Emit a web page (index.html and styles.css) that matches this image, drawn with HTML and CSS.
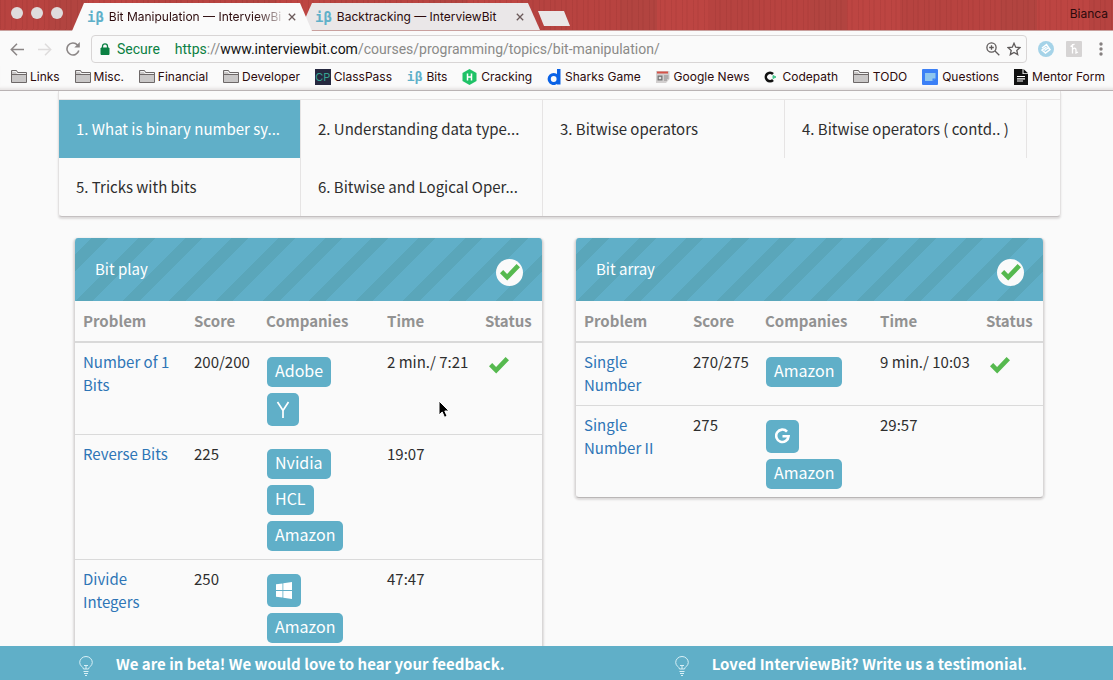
FILE: index.html
```html
<!DOCTYPE html>
<html lang="en">
<head>
<meta charset="utf-8">
<title>Bit Manipulation — InterviewBit</title>
<link rel="stylesheet" href="styles.css">
</head>
<body>
<svg class="defs" aria-hidden="true">
  <symbol id="folder" viewBox="0 0 16 13"><path d="M.5 12.500V.5h5l1.200 2h8.800v10z" fill="#c9c7c7" stroke="#6d6868"/><path d="M1 4.500h14" stroke="#6d6868"/><path d="M1.500 1.500h3.500l1 2H15" stroke="#f3f3f3" fill="none"/></symbol>
  <symbol id="check" viewBox="0 0 20 17"><path d="M0 9.200 3.200 6l3.900 3.900L16.600 0 20 3.300 7.200 16.500z" fill="#56b94f"/></symbol>
  <symbol id="bulb" viewBox="0 0 14 20"><g fill="none" stroke="#d9f0f6" stroke-width="1"><path d="M4.500 13C4.500 11 .7 10 .7 6.500a6.300 6 0 0 1 12.600 0C13.300 10 9.500 11 9.500 13z"/><path d="M5 9.500h4M7 10v3M4.500 15.500h5M5 17.500h4M6 19.500h2"/></g></symbol>
  <symbol id="close" viewBox="0 0 8 8"><path d="M.8.8l6.400 6.400M7.200.8.8 7.200" stroke="#6b5a5a" stroke-width="1.300"/></symbol>
</svg>

<header class="browser">
  <div class="tabstrip">
    <div class="lights"><i></i><i></i><i></i></div>
    <div class="tab tab-active"><span class="ib">iβ</span><span class="tab-title fade">Bit Manipulation — InterviewBi</span><button class="close" aria-label="Close tab"><svg width="8" height="8"><use href="#close"/></svg></button></div>
    <div class="tab tab-idle"><span class="ib">iβ</span><span class="tab-title">Backtracking — InterviewBit</span><button class="close" aria-label="Close tab"><svg width="8" height="8"><use href="#close"/></svg></button></div>
    <button class="newtab" aria-label="New tab"></button>
    <span class="profile">Bianca</span>
  </div>
  <div class="toolbar">
    <button class="icon-btn" aria-label="Back"><svg width="14" height="13" viewBox="0 0 14 13" fill="none" stroke="#8b8686" stroke-width="1.500"><path d="M14 6.500H1.500M7 .8 1.300 6.500 7 12.200"/></svg></button>
    <button class="icon-btn" aria-label="Forward"><svg width="14" height="13" viewBox="0 0 14 13" fill="none" stroke="#dedcdc" stroke-width="1.500"><path d="M0 6.500h12.500M7 .8l5.700 5.700L7 12.200"/></svg></button>
    <button class="icon-btn" aria-label="Reload"><svg width="14" height="14" viewBox="0 0 14 14" fill="none" stroke="#8b8686" stroke-width="1.600"><path d="M12.800 8.500A6 6 0 1 1 11.500 3"/><path d="M13.800 0v5.500H8.300z" fill="#8b8686" stroke="none"/></svg></button>
    <div class="address">
      <svg width="10" height="12" viewBox="0 0 10 12"><path d="M1 5h8v6.500H1z" fill="#0b8043" stroke="#0b8043"/><path d="M2.500 5V3.200a2.500 2.300 0 0 1 5 0V5" fill="none" stroke="#0b8043" stroke-width="1.300"/></svg>
      <span class="secure">Secure</span>
      <span class="url"><span class="scheme">https</span>://<b>www.interviewbit.com</b>/courses/programming/topics/bit-manipulation/</span>
      <button class="icon-btn" aria-label="Zoom"><svg width="14" height="14" viewBox="0 0 14 14" fill="none" stroke="#5e5a5a" stroke-width="1.300"><circle cx="5.500" cy="5.500" r="4.600"/><path d="M9 9l4.300 4.300M3.200 5.500h4.600M5.500 3.200v4.600"/></svg></button>
      <button class="icon-btn" aria-label="Bookmark"><svg width="14" height="14" viewBox="0 0 14 14" fill="none" stroke="#5e5a5a" stroke-width="1.300"><path d="m7 1.300 1.700 3.900 4.300.4-3.200 2.800.9 4.200L7 10.400l-3.700 2.200.9-4.200L1 5.600l4.300-.4z"/></svg></button>
    </div>
    <div class="extensions">
      <svg width="16" height="16" viewBox="0 0 16 16"><circle cx="8" cy="8" r="8" fill="#a5d3e8"/><path d="m4 7 4.500-3.500 3.500 5-4.500 3.500-3.500-3 4.500-3M6.500 9.500 10 7" fill="none" stroke="#fff" stroke-width="1.500"/></svg>
      <svg width="16" height="16" viewBox="0 0 16 16"><rect width="16" height="16" rx="1" fill="#d6d4d4"/><path d="M6.500 3v9.500M4.500 5.500l4-2.500M6.500 8.500c1.500-2 3.500-1.500 3.500.5V12l2-1" fill="none" stroke="#fff" stroke-width="1.300"/></svg>
      <button class="icon-btn" aria-label="Menu"><svg width="4" height="14" viewBox="0 0 4 14" fill="#858080"><circle cx="2" cy="2" r="1.700"/><circle cx="2" cy="7" r="1.700"/><circle cx="2" cy="12" r="1.700"/></svg></button>
    </div>
  </div>
  <nav class="bookmarks">
    <a href="#"><svg width="16" height="13"><use href="#folder"/></svg>Links</a>
    <a href="#"><svg width="16" height="13"><use href="#folder"/></svg>Misc.</a>
    <a href="#"><svg width="16" height="13"><use href="#folder"/></svg>Financial</a>
    <a href="#"><svg width="16" height="13"><use href="#folder"/></svg>Developer</a>
    <a href="#"><span class="cp">CP</span>ClassPass</a>
    <a href="#"><span class="ib">iβ</span>Bits</a>
    <a href="#"><svg width="15" height="16" viewBox="0 0 15 16"><path d="m7.500 0 7 4v8l-7 4-7-4V4z" fill="#1fc267"/><path d="M5.500 4.500v7M9.500 4.500v7M5.500 8h4" stroke="#fff" stroke-width="1.500"/></svg>Cracking</a>
    <a href="#"><svg width="14" height="16" viewBox="0 0 14 16"><path d="M10 0h3.500v15.500H10z" fill="#0a62e6"/><circle cx="6.700" cy="10" r="4.500" fill="none" stroke="#0a62e6" stroke-width="3.200"/></svg>Sharks Game</a>
    <a href="#"><svg width="14" height="12" viewBox="0 0 14 12"><path d="M0 0h13.500v8l-3.500 4H0z" fill="#d2cfcf"/><path d="M1 1.500h11" stroke="#d45348" stroke-width="2"/><path d="M8 5h4.500M8 7h4.500M8 9h3" stroke="#8c8888"/><path d="M1.500 4.500h5v5h-5z" fill="#777"/><circle cx="4" cy="7" r="1.300" fill="#ddd"/></svg>Google News</a>
    <a href="#"><svg width="14" height="12" viewBox="0 0 14 12"><path d="M9 3A4.200 4.200 0 1 0 9 9" fill="none" stroke="#111" stroke-width="2.600"/><path d="m9 4.500 3 1.500-3 1.500z" fill="#43c58a" stroke="#43c58a"/></svg>Codepath</a>
    <a href="#"><svg width="16" height="13"><use href="#folder"/></svg>TODO</a>
    <a href="#"><svg width="16" height="16" viewBox="0 0 16 16"><rect width="16" height="16" rx="1" fill="#3c80f6"/><path d="M3 4h10.500v5.500L10.500 12H3z" fill="#8fc6ee"/><path d="M10.500 12V9.500h3z" fill="#3c80f6"/></svg>Questions</a>
    <a href="#"><svg width="14" height="16" viewBox="0 0 14 16"><path d="M0 0h8.500v5H14v11H0z" fill="#111"/><path d="M9.500 0 14 4.200H9.500z" fill="#111"/><path d="M3 7.500h8M3 9.800h8M3 12h6" stroke="#fff" stroke-width="1.200"/></svg>Mentor Form</a>
  </nav>
</header>

<main class="page">
  <nav class="topics">
    <a class="current" href="#">1. What is binary number sy...</a>
    <a href="#">2. Understanding data type...</a>
    <a href="#">3. Bitwise operators</a>
    <a href="#">4. Bitwise operators ( contd.. )</a>
    <a href="#">5. Tricks with bits</a>
    <a href="#">6. Bitwise and Logical Oper...</a>
  </nav>
  <div class="cards">
    <section class="card">
      <div class="card-head"><h2>Bit play</h2><span class="done"><svg width="20" height="17"><use href="#check"/></svg></span></div>
      <table>
        <colgroup><col class="c-name"><col class="c-score"><col class="c-comp"><col class="c-time"><col class="c-status"></colgroup>
        <thead><tr><th>Problem</th><th>Score</th><th>Companies</th><th>Time</th><th>Status</th></tr></thead>
        <tbody>
          <tr><td><a href="#">Number of 1 Bits</a></td><td>200/200</td><td><div class="badges"><span class="badge">Adobe</span><span class="badge mark"><svg width="14" height="17" viewBox="0 0 14 17" fill="none" stroke="#fff" stroke-width="1.700"><path d="M1.500 1 7 9.500 12.500 1M7 9v8"/></svg></span></div></td><td>2 min./ 7:21</td><td><svg class="tick" width="20" height="17"><use href="#check"/></svg></td></tr>
          <tr><td><a href="#">Reverse Bits</a></td><td>225</td><td><div class="badges"><span class="badge">Nvidia</span><span class="badge">HCL</span><span class="badge">Amazon</span></div></td><td>19:07</td><td></td></tr>
          <tr><td><a href="#">Divide Integers</a></td><td>250</td><td><div class="badges"><span class="badge mark"><svg width="16" height="17" viewBox="0 0 16 17" fill="#fff"><path d="M0 2.300 6.500 1.400V8H0zM7.300 1.200 16 0v8H7.300zM0 9h6.500v6.600L0 14.700zM7.300 9H16v8l-8.700-1.300z"/></svg></span><span class="badge">Amazon</span></div></td><td>47:47</td><td></td></tr>
        </tbody>
      </table>
    </section>
    <section class="card card-short">
      <div class="card-head"><h2>Bit array</h2><span class="done"><svg width="20" height="17"><use href="#check"/></svg></span></div>
      <table>
        <colgroup><col class="c-name"><col class="c-score"><col class="c-comp-narrow"><col class="c-time-wide"><col class="c-status"></colgroup>
        <thead><tr><th>Problem</th><th>Score</th><th>Companies</th><th>Time</th><th>Status</th></tr></thead>
        <tbody>
          <tr><td><a href="#">Single Number</a></td><td>270/275</td><td><div class="badges"><span class="badge">Amazon</span></div></td><td>9 min./ 10:03</td><td><svg class="tick" width="20" height="17"><use href="#check"/></svg></td></tr>
          <tr><td><a href="#">Single Number II</a></td><td>275</td><td><div class="badges"><span class="badge mark"><svg width="15" height="16" viewBox="0 0 15 16" fill="none" stroke="#fff" stroke-width="2.600"><path d="M12 3.600A6.200 6.200 0 1 0 13.600 8.200H7.500"/></svg></span><span class="badge">Amazon</span></div></td><td>29:57</td><td></td></tr>
        </tbody>
      </table>
    </section>
  </div>
</main>

<footer class="notice">
  <a href="#"><svg width="14" height="20"><use href="#bulb"/></svg>We are in beta! We would love to hear your feedback.</a>
  <a href="#"><svg width="14" height="20"><use href="#bulb"/></svg>Loved InterviewBit? Write us a testimonial.</a>
</footer>

<svg class="cursor" width="14" height="20" viewBox="0 0 14 20"><path d="M2 1v14l3.200-3 2.300 5.300 2.600-1.100L7.800 11H12z" fill="#000" stroke="#fff"/></svg>
</body>
</html>
```
FILE: styles.css
```css
* { box-sizing: border-box; }
body {
  margin: 0;
  height: 100vh;
  display: flex;
  flex-direction: column;
  overflow: hidden;
  background: #fafafa;
  color: #2e2e2e;
  font-family: "Noto Sans CJK SC", "Noto Sans", sans-serif;
  font-size: 15px;
  line-height: 23px;
}
a { text-decoration: none; color: inherit; }
button { border: 0; padding: 0; margin: 0; background: none; }
svg { flex: none; display: block; }
.defs { position: absolute; width: 0; height: 0; }

.browser {
  flex: none;
  font-family: Inter, Roboto, sans-serif;
  font-size: 12px;
  line-height: 16px;
  color: #2c0a0c;
  border-bottom: 1px solid #b9b3b4;
}
.tabstrip {
  display: flex;
  height: 31px;
  padding: 3px 5px 0 11px;
  border-bottom: 1px solid #c9a09e;
  background:
    repeating-linear-gradient(91deg, rgba(80, 10, 10, .08) 0 1px, transparent 1px 4px, rgba(80, 10, 10, .05) 4px 6px, transparent 6px 11px),
    repeating-linear-gradient(90deg, #b84340 0 50px, #b24440 50px 87px, #bd4542 87px 140px, #b64340 140px 190px);
}
.lights { display: flex; gap: 8px; padding-top: 4px; width: 61px; }
.lights i { width: 12px; height: 12px; border-radius: 50%; background: #dfdcdc; }
.tab {
  display: flex;
  align-items: center;
  height: 28px;
  width: 240px;
  padding: 0 16px 0 15px;
  clip-path: polygon(12px 0, 228px 0, 100% 100%, 0 100%);
}
.tab-active { background: #fafafa; z-index: 1; }
.tab-idle { background: #eae7e8; margin-left: -12px; height: 27px; }
.tab-idle + .newtab { margin-left: -2px; }
.ib {
  font-family: "DejaVu Sans Mono", monospace;
  font-weight: bold;
  font-size: 14px;
  line-height: 16px;
  color: #5fb0c9;
}
.tab-title { flex: 1; margin: 0 6px 0 5px; white-space: nowrap; }
.fade { mask-image: linear-gradient(90deg, #000 85%, rgba(0, 0, 0, .2)); }
.close { width: 8px; height: 8px; }
.newtab {
  width: 32px;
  height: 15px;
  margin-top: 8px;
  background: #eae7e8;
  clip-path: polygon(0 0, 26px 0, 100% 100%, 6px 100%);
}
.profile { margin-left: auto; padding-top: 3px; }

.toolbar { display: flex; align-items: center; height: 35px; padding: 1px 10px 0; }
.toolbar > .icon-btn { width: 28px; }
.toolbar > .icon-btn:nth-child(3) { width: 25px; }
.address {
  flex: 1;
  display: flex;
  align-items: center;
  height: 28px;
  padding: 0 5px 0 8px;
  border: 1px solid #d8d5d5;
  border-radius: 4px;
  font-family: Roboto, Inter, sans-serif;
  font-size: 14px;
}
.secure { color: #0b8043; margin: 0 15px 0 7px; }
.url { flex: 1; color: #8a8a88; white-space: nowrap; }
.url b { font-weight: 400; color: #111; }
.url .scheme { color: #0b8043; }
.address .icon-btn + .icon-btn { margin-left: 7px; }
.extensions { display: flex; align-items: center; gap: 12px; padding-left: 11px; }
.extensions .icon-btn { margin-left: 5px; }
.bookmarks {
  display: flex;
  justify-content: space-between;
  align-items: center;
  height: 24px;
  padding: 0 8px 0 11px;
  box-shadow: inset 0 -4px 3px -2px #e6e3e3;
  white-space: nowrap;
}
.bookmarks a { display: flex; align-items: center; gap: 4px; height: 24px; padding-bottom: 3px; }
.bookmarks a:nth-child(-n + 5) { gap: 3px; }
.bookmarks .ib { font-size: 13px; }
.cp {
  width: 16px;
  height: 16px;
  background: #26283f;
  color: #36a391;
  text-align: center;
  font-size: 11px;
}

.page { flex: 1; min-height: 0; overflow: hidden; padding: 0 52px 0 58px; }
.topics {
  display: flex;
  flex-wrap: wrap;
  padding-top: 8px;
  border: 1px solid #e3e1e1;
  border-top: 0;
  border-bottom-color: #c4c0c1;
  border-radius: 0 0 4px 4px;
  box-shadow: 0 2px 2px #dddbdb;
  background: linear-gradient(#e6e4e4, #e6e4e4) 0 8px / 100% 1px no-repeat;
}
.topics a {
  width: 242px;
  height: 58px;
  margin-top: 1px;
  padding: 17px 17px 0;
  border-right: 1px solid #e6e4e4;
  white-space: nowrap;
}
.topics a:nth-child(n + 5) { margin-top: 0; }
.topics .current { background: #60afc8; color: #fff; }

.cards { display: grid; grid-template-columns: 1fr 1fr; gap: 32px; align-items: start; padding: 21px 17px 0 16px; }
.card {
  border: 1px solid #d9d7d7;
  border-top: 0;
  border-radius: 4px;
  box-shadow: 0 1px 2px 1px #dddbdb;
  overflow: hidden;
}
.card-short { border-bottom-color: #b9b6b6; }
.card-head {
  display: flex;
  justify-content: space-between;
  align-items: center;
  height: 63px;
  padding: 0 19px 2px 20px;
  color: #fff;
  background: repeating-linear-gradient(135deg, #60afc8 0 12px, #5aa6ba 12px 24px, #60afc8 24px 33px);
}
.card-head h2 { margin: 0; font-size: 15px; font-weight: 400; }
.done {
  display: grid;
  place-items: center;
  width: 27px;
  height: 27px;
  margin-top: 7px;
  border-radius: 50%;
  background: #fafafa;
}
table { width: 100%; table-layout: fixed; border-collapse: separate; border-spacing: 0; }
.c-score { width: 72px; }
.c-comp { width: 121px; }
.c-comp-narrow { width: 115px; }
.c-time { width: 98px; }
.c-time-wide { width: 106px; }
.c-status { width: 65px; }
th { padding: 7px 8px 9px; height: 42px; text-align: left; font-weight: 700; color: #929292; border-bottom: 2px solid #d9d9d9; }
td { padding: 7px 8px 9px; vertical-align: top; border-top: 1px solid #dadada; white-space: nowrap; }
td:first-child { white-space: normal; }
tbody tr:first-child td { border-top: 0; }
td a { color: #2e75b6; }
.badges { display: flex; flex-direction: column; align-items: flex-start; gap: 6px; padding: 7px 0 0 1px; margin-bottom: -1px; }
.badge { height: 30px; padding: 2px 8px; border-radius: 5px; background: #60afc8; color: #fff; font-size: 16px; }
.mark { height: 33px; padding: 8px 9px; }
.tick { margin: 7px 0 0 4px; }

.notice {
  flex: none;
  display: flex;
  justify-content: space-between;
  height: 34px;
  padding: 0 86px 0 79px;
  background: #60afc8;
  color: #fff;
  font-weight: 700;
}
.notice a { display: flex; align-items: center; gap: 23px; }
.notice svg { margin-top: 5px; }
.cursor { position: absolute; left: 437px; top: 400px; }
```
